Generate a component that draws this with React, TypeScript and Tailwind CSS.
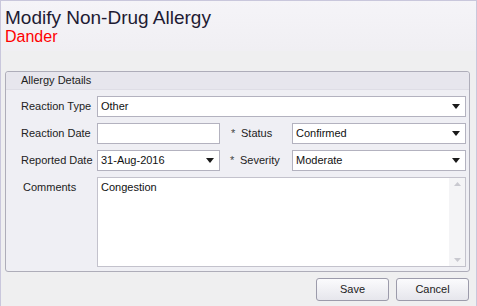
import type { ReactNode } from "react";

const font = { fontFamily: '"Liberation Sans", Arial, sans-serif' };

function Arrow() {
    return (
        <svg width="8" height="5" viewBox="0 0 8 5" className="shrink-0">
            <path d="M0 0h8L4 5z" fill="#1a1a1a" />
        </svg>
    );
}

function Select({ value, width }: { value: string; width: string }) {
    return (
        <div
            className={`${width} h-[21px] bg-white border border-[#b3b2bf] flex items-center pl-[3px] pr-[5px] text-[11px] text-[#111]`}
        >
            <span className="flex-1 truncate">{value}</span>
            <Arrow />
        </div>
    );
}

function Label({ children, width = "w-[76px]" }: { children: ReactNode; width?: string }) {
    return <div className={`${width} shrink-0 text-[11px] text-[#222]`}>{children}</div>;
}

function Star() {
    return <span className="w-[10px] text-[11px] text-[#444]">*</span>;
}

function Button({ children }: { children: ReactNode }) {
    return (
        <button className="w-[73px] h-[23px] rounded-[3px] border border-[#9c9bab] bg-gradient-to-b from-[#fbfbfd] to-[#e6e6ec] text-[11px] text-[#222]">
            {children}
        </button>
    );
}

export default function App() {
    return (
        <main
            className="w-[477px] h-[306px] bg-[#efeff0] border-l border-t border-r border-[#c9c7dc] flex flex-col"
            style={font}
        >
            <div className="h-[50px] bg-gradient-to-b from-[#f5f4f8] to-[#f0eff3] px-[4px] pt-[6px]">
                <div className="text-[19px] leading-[22px] text-[#1e1b33]">Modify Non-Drug Allergy</div>
                <div className="text-[16px] leading-[16px] text-[#ff0000]">Dander</div>
            </div>

            <div className="mt-[20px] mx-[4px] w-[465px] h-[201px] border border-[#aeadb9] rounded-[3px] flex flex-col bg-[#efeff4]">
                <div className="h-[18px] bg-[#e7e6ed] border-b border-[#dedde5] px-[15px] text-[11px] leading-[17px] text-[#222] rounded-t-[3px]">
                    Allergy Details
                </div>
                <div className="pl-[15px] pt-[6px] flex flex-col gap-[6px]">
                    <div className="flex items-center">
                        <Label>Reaction Type</Label>
                        <Select value="Other" width="w-[369px]" />
                    </div>
                    <div className="flex items-center">
                        <Label>Reaction Date</Label>
                        <div className="w-[123px] h-[21px] bg-white border border-[#b3b2bf]" />
                        <div className="w-[72px] pl-[11px] flex items-center text-[11px] text-[#222]">
                            <Star />
                            Status
                        </div>
                        <Select value="Confirmed" width="w-[174px]" />
                    </div>
                    <div className="flex items-center">
                        <Label>Reported Date</Label>
                        <Select value="31-Aug-2016" width="w-[123px]" />
                        <div className="w-[72px] pl-[10px] flex items-center text-[11px] text-[#222]">
                            <Star />
                            Severity
                        </div>
                        <Select value="Moderate" width="w-[174px]" />
                    </div>
                    <div className="flex items-start">
                        <Label>
                            <div className="pl-[2px] pt-[2px]">Comments</div>
                        </Label>
                        <div className="w-[369px] h-[90px] bg-white border border-[#c3c2cc] flex">
                            <div className="flex-1 px-[3px] pt-[1px] text-[11px] text-[#111]">Congestion</div>
                            <div className="w-[16px] bg-[#f4f4f6] flex flex-col items-center justify-between py-[4px]">
                                <svg width="7" height="4" viewBox="0 0 7 4">
                                    <path d="M0 4h7L3.5 0z" fill="#c9c9d0" />
                                </svg>
                                <svg width="7" height="4" viewBox="0 0 7 4">
                                    <path d="M0 0h7L3.5 4z" fill="#c9c9d0" />
                                </svg>
                            </div>
                        </div>
                    </div>
                </div>
            </div>

            <div className="flex justify-end gap-[7px] pr-[7px] pt-[6px]">
                <Button>Save</Button>
                <Button>Cancel</Button>
            </div>
        </main>
    );
}
